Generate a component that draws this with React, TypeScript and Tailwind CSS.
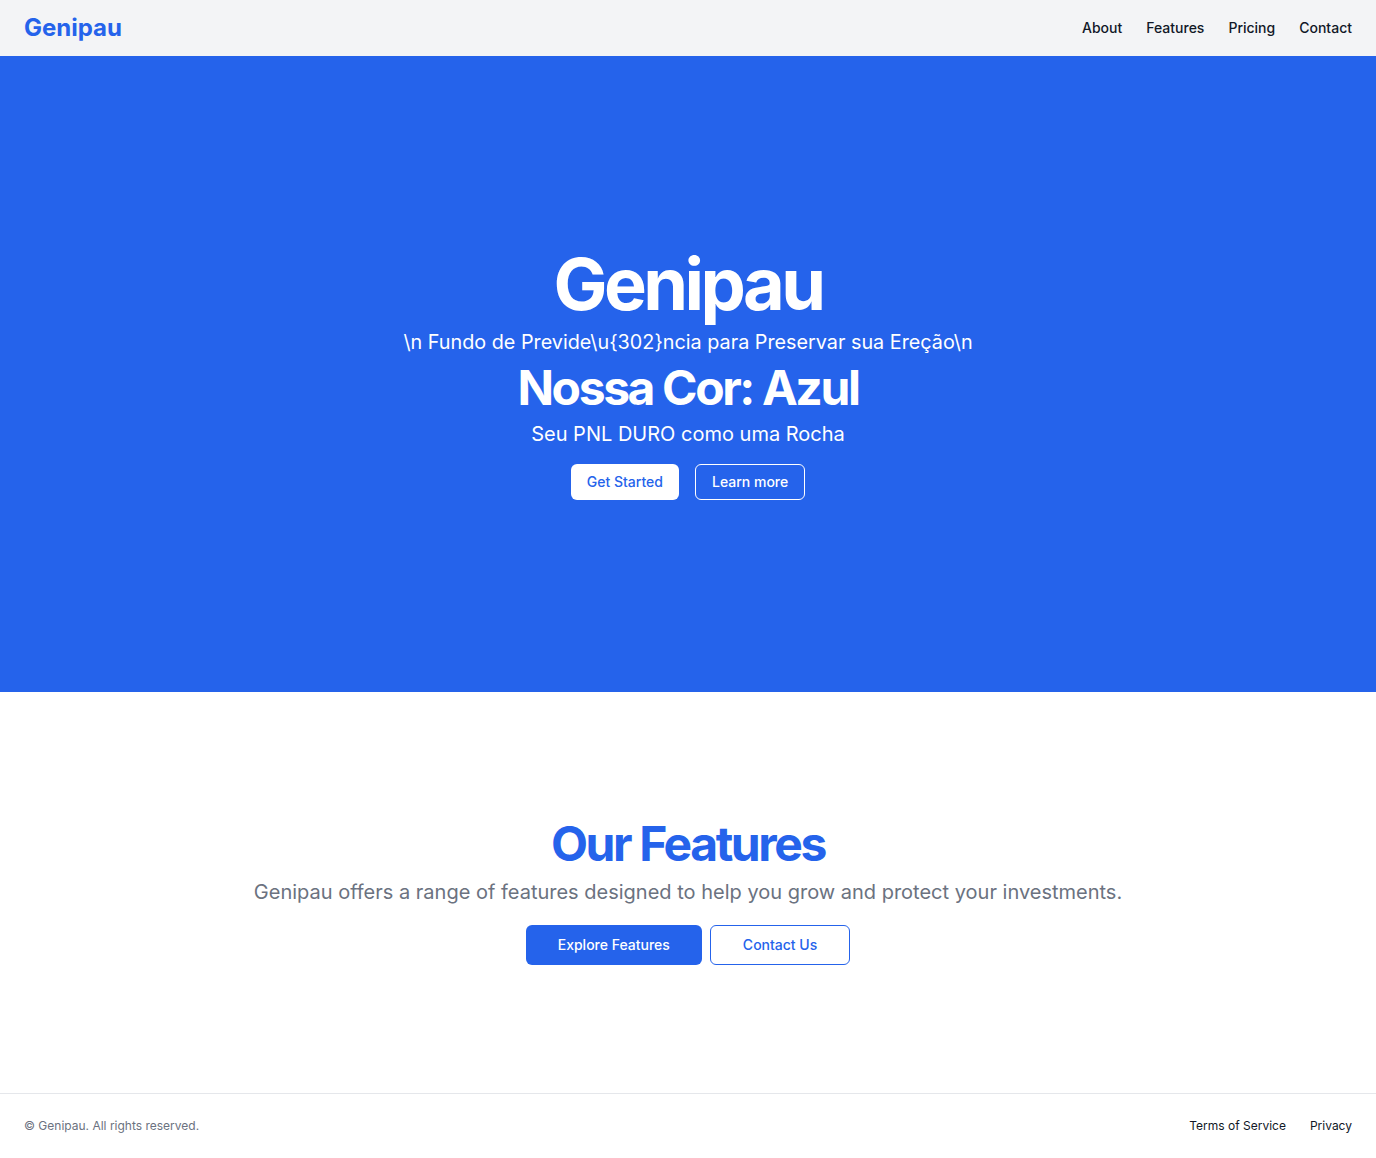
import React from "react";

const navLinks = ["About", "Features", "Pricing", "Contact"];

const App: React.FC = () => {
  return (
    <div className="flex min-h-screen flex-col bg-white font-['Inter',sans-serif] text-[#111827]">
      <header className="flex h-14 items-center bg-[#f3f4f6] px-6">
        <a href="#" className="text-2xl font-bold text-[#2563eb]">Genipau</a>
        <nav className="ml-auto flex gap-6">
          {navLinks.map((l) => (
            <a key={l} href="#" className="text-sm font-medium text-[#111827]">{l}</a>
          ))}
        </nav>
      </header>

      <main className="flex-1">
        <section className="flex h-[636px] items-center justify-center bg-[#2563eb] px-6">
          <div className="flex flex-col items-center text-center text-white">
            <h1 className="text-7xl font-bold tracking-tighter">Genipau</h1>
            <p className="mt-2 text-[19.8px] leading-7">\n Fundo de Previde\u{"{302}"}ncia para Preservar sua Ereção\n</p>
            <h2 className="mt-2 text-5xl font-bold tracking-tighter">Nossa Cor: Azul</h2>
            <p className="mt-2 text-xl">Seu PNL DURO como uma Rocha</p>
            <div className="mt-4 flex gap-4">
              <button className="h-9 rounded-md bg-white px-4 text-sm font-medium text-[#2563eb]">Get Started</button>
              <button className="h-9 rounded-md border border-white px-4 text-sm font-medium text-white">Learn more</button>
            </div>
          </div>
        </section>

        <section className="flex flex-col items-center px-6 pt-32 pb-[121px] text-center">
          <h2 className="text-5xl font-bold tracking-tighter text-[#2563eb]">Our Features</h2>
          <p className="mt-2.5 text-xl text-[#6b7280]">
            Genipau offers a range of features designed to help you grow and protect your investments.
          </p>
          <div className="mt-[19px] flex gap-2">
            <button className="h-10 rounded-md bg-[#2563eb] px-8 text-sm font-medium text-white">Explore Features</button>
            <button className="h-10 rounded-md border border-[#2563eb] px-8 text-sm font-medium text-[#2563eb]">Contact Us</button>
          </div>
        </section>
      </main>

      <footer className="flex items-center border-t border-[#e5e7eb] px-6 py-6">
        <p className="text-xs text-[#6b7280]">© Genipau. All rights reserved.</p>
        <nav className="ml-auto flex gap-6">
          <a href="#" className="text-xs text-[#111827]">Terms of Service</a>
          <a href="#" className="text-xs text-[#111827]">Privacy</a>
        </nav>
      </footer>
    </div>
  );
};

export default App;
